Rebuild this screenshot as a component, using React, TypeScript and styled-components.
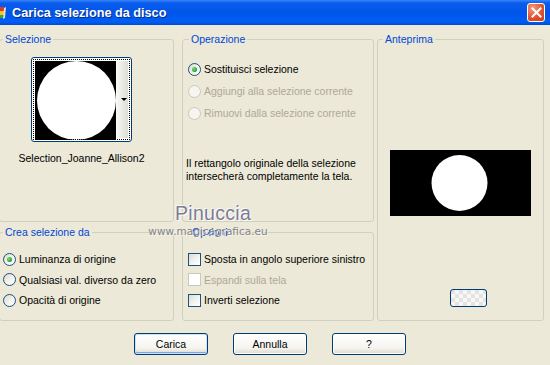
import React from 'react'
import styled, { createGlobalStyle } from 'styled-components'

const GlobalStyle = createGlobalStyle`
  html, body {
    margin: 0;
    padding: 0;
    background: #ece9d8;
  }
  body {
    font-family: "Liberation Sans", Arial, sans-serif;
    font-size: 10.5px;
    color: #000;
    overflow: hidden;
  }
`

const Window = styled.div`
  position: relative;
  width: 550px;
  height: 365px;
  overflow: hidden;
  background: #ece9d8;
`

const TitleBar = styled.div`
  height: 25px;
  display: flex;
  align-items: center;
  padding-right: 5px;
  background: linear-gradient(#3a84f7 0%, #0a5cee 12%, #0055e8 50%, #005ef4 86%, #004bd8 100%);
  color: #fff;
  font: bold 12.7px "Liberation Sans", Arial, sans-serif;
`

const TitleIcon = styled.svg`
  flex: none;
  margin-left: -1px;
`

const TitleText = styled.span`
  flex: 1;
  margin-left: 5px;
  text-shadow: 1px 1px 0 #0a2d8a;
`

const CloseButton = styled.div`
  width: 18px;
  height: 19px;
  box-sizing: border-box;
  border: 1px solid #fff;
  border-radius: 3px;
  background: radial-gradient(circle at 30% 25%, #f49b7e 0%, #e2522f 55%, #c63f1c 100%);
  display: flex;
  align-items: center;
  justify-content: center;
`

const Body = styled.div`
  display: grid;
  grid-template-columns: 175px 8px 192px 3px 167px;
  grid-template-rows: 189px 95px;
  row-gap: 4px;
  grid-template-areas:
    "sel . op . prev"
    "crea . opt . prev";
  margin-left: -1px;
  padding-top: 8px;
`

const Frame = styled.fieldset<{ $area: string }>`
  grid-area: ${p => p.$area};
  margin: 0;
  padding: 0;
  min-width: 0;
  border: 1px solid #d0d0bf;
  border-radius: 3px;
`

const Legend = styled.legend<{ $inset: number }>`
  color: #0046d5;
  padding: 0 2px;
  margin-left: ${p => p.$inset}px;
  line-height: 13px;
`

const SelectionPane = styled.div`
  display: flex;
  flex-direction: column;
  align-items: center;
  padding: 11px 10px 0 0;
`

const Thumb = styled.div`
  position: relative;
  width: 101px;
  height: 85px;
  box-sizing: border-box;
  border: 1px solid #003c74;
  border-radius: 3px;
  padding: 2px;
  background: #fff;
  display: flex;
  &::after {
    content: '';
    position: absolute;
    inset: 1px;
    border: 1px dotted #000;
  }
`

const ThumbImage = styled.svg`
  display: block;
  margin-top: 1px;
  margin-left: 1px;
`

const ThumbStrip = styled.div`
  flex: 1;
  margin: 1px 1px 1px 0;
  background: linear-gradient(to right, #fafaf8, #dcdcd4);
  display: flex;
  align-items: center;
  justify-content: flex-end;
  padding-right: 1px;
`

const Arrow = styled.div`
  width: 0;
  height: 0;
  border-left: 3px solid transparent;
  border-right: 3px solid transparent;
  border-top: 3px solid #000;
`

const ThumbLabel = styled.div`
  margin-top: 10px;
  line-height: 13px;
`

const Pane = styled.div<{ $top: number; $left: number }>`
  padding: ${p => p.$top}px 0 0 ${p => p.$left}px;
`

const OptionList = styled.div<{ $row: number; $indent?: number }>`
  display: flex;
  flex-direction: column;
  padding-left: ${p => p.$indent ?? 0}px;
  & > * {
    height: ${p => p.$row}px;
  }
`

const Option = styled.label<{ $disabled?: boolean }>`
  display: flex;
  align-items: center;
  gap: 3px;
  color: ${p => (p.$disabled ? '#aca899' : '#000')};
  white-space: nowrap;
`

const Radio = styled.span<{ $checked?: boolean; $disabled?: boolean }>`
  flex: none;
  width: 13px;
  height: 13px;
  box-sizing: border-box;
  border-radius: 50%;
  border: 1px solid ${p => (p.$disabled ? '#cac8bb' : '#1c5180')};
  background: ${p =>
    p.$disabled ? '#f6f5ef' : 'linear-gradient(135deg, #dcd9cc 0%, #f4f3ee 55%, #fff 100%)'};
  display: flex;
  align-items: center;
  justify-content: center;
  &::after {
    content: '';
    display: ${p => (p.$checked ? 'block' : 'none')};
    width: 5px;
    height: 5px;
    border-radius: 50%;
    background: radial-gradient(circle at 35% 35%, #7be07b, #21a121 70%);
  }
`

const Check = styled.span<{ $disabled?: boolean }>`
  flex: none;
  width: 13px;
  height: 13px;
  box-sizing: border-box;
  border: 1px solid ${p => (p.$disabled ? '#cac8bb' : '#1c5180')};
  background: ${p =>
    p.$disabled ? '#fff' : 'linear-gradient(135deg, #dcdcd5 0%, #f5f5f1 60%, #fff 100%)'};
`

const Description = styled.p`
  margin: 33px 0 0;
  line-height: 12.5px;
`

const PreviewPane = styled.div`
  display: flex;
  flex-direction: column;
  align-items: center;
  padding-top: 104px;
`

const PreviewButton = styled.div`
  width: 37px;
  height: 18px;
  box-sizing: border-box;
  margin: 73px 0 0 16px;
  border: 1px solid #003c74;
  border-radius: 3px;
  background:
    repeating-conic-gradient(#f7f7f5 0% 25%, #e4e4e0 0% 50%) 0 0 / 8px 8px;
`

const ButtonRow = styled.div`
  display: flex;
  gap: 25px;
  padding: 12px 0 0 134px;
`

const Button = styled.div<{ $default?: boolean }>`
  width: 74px;
  height: 22px;
  box-sizing: border-box;
  border: 1px solid #003c74;
  border-radius: 3px;
  background: linear-gradient(#ffffff 0%, #f5f4ef 70%, #e3e0d4 92%, #d6d0c5 100%);
  box-shadow: ${p =>
    p.$default ? 'inset 0 0 0 1px #cde0fb, inset 0 -1px 0 1px #7ca4e8' : 'inset 0 0 0 1px #fff'};
  display: flex;
  align-items: center;
  justify-content: center;
`

const Watermark = styled.div`
  position: absolute;
  left: 143px;
  top: 202px;
  display: flex;
  flex-direction: column;
  align-items: center;
  width: 130px;
  pointer-events: none;
`

const WatermarkName = styled.span`
  margin-left: 10px;
  font: 19.5px "Liberation Sans", Arial, sans-serif;
  letter-spacing: 0.3px;
  color: #7c7c94;
  text-shadow: 1px 1px 0 #fff, -1px -1px 0 #f8f8f8;
  line-height: 22px;
`

const WatermarkUrl = styled.span`
  font: 10.5px "DejaVu Sans", sans-serif;
  color: #858585;
  text-shadow: 1px 1px 0 #f4f4f4;
  line-height: 13px;
  margin-top: 1px;
`

export default function App() {
  return (
    <Window>
      <GlobalStyle />
      <TitleBar>
        <TitleIcon width="8" height="14" viewBox="0 0 8 14">
          <rect x="0" y="1" width="5" height="4" fill="#d83a2a" />
          <rect x="0" y="5" width="6" height="4" fill="#f4c430" />
          <rect x="0" y="9" width="4" height="3" fill="#3aa63a" />
          <path d="M5 2 L7 1 L6 12 L4 13 Z" fill="#e8e0c8" />
        </TitleIcon>
        <TitleText>Carica selezione da disco</TitleText>
        <CloseButton>
          <svg width="11" height="11" viewBox="0 0 11 11">
            <path d="M1.5 1.5 L9.5 9.5 M9.5 1.5 L1.5 9.5" stroke="#fff" strokeWidth="2" strokeLinecap="square" />
          </svg>
        </CloseButton>
      </TitleBar>

      <Body>
        <Frame $area="sel">
          <Legend $inset={3}>Selezione</Legend>
          <SelectionPane>
            <Thumb>
              <ThumbImage width="81" height="79" viewBox="0 0 81 79">
                <rect width="81" height="79" fill="#000" />
                <circle cx="41.5" cy="39.5" r="39.5" fill="#fff" />
              </ThumbImage>
              <ThumbStrip>
                <Arrow />
              </ThumbStrip>
            </Thumb>
            <ThumbLabel>Selection_Joanne_Allison2</ThumbLabel>
          </SelectionPane>
        </Frame>

        <Frame $area="op">
          <Legend $inset={6}>Operazione</Legend>
          <Pane $top={12} $left={3}>
            <OptionList $row={22} $indent={2}>
              <Option>
                <Radio $checked />
                Sostituisci selezione
              </Option>
              <Option $disabled>
                <Radio $disabled />
                Aggiungi alla selezione corrente
              </Option>
              <Option $disabled>
                <Radio $disabled />
                Rimuovi dalla selezione corrente
              </Option>
            </OptionList>
            <Description>
              Il rettangolo originale della selezione
              <br />
              intersecherà completamente la tela.
            </Description>
          </Pane>
        </Frame>

        <Frame $area="prev">
          <Legend $inset={5}>Anteprima</Legend>
          <PreviewPane>
            <svg width="141" height="66" viewBox="0 0 141 66">
              <rect width="141" height="66" fill="#000" />
              <circle cx="69.5" cy="33" r="28" fill="#fff" />
            </svg>
            <PreviewButton />
          </PreviewPane>
        </Frame>

        <Frame $area="crea">
          <Legend $inset={3}>Crea selezione da</Legend>
          <Pane $top={10} $left={3}>
            <OptionList $row={20.5}>
              <Option>
                <Radio $checked />
                Luminanza di origine
              </Option>
              <Option>
                <Radio />
                Qualsiasi val. diverso da zero
              </Option>
              <Option>
                <Radio />
                Opacità di origine
              </Option>
            </OptionList>
          </Pane>
        </Frame>

        <Frame $area="opt">
          <Legend $inset={7}>Opzioni</Legend>
          <Pane $top={10} $left={5}>
            <OptionList $row={20.5}>
              <Option>
                <Check />
                Sposta in angolo superiore sinistro
              </Option>
              <Option $disabled>
                <Check $disabled />
                Espandi sulla tela
              </Option>
              <Option>
                <Check />
                Inverti selezione
              </Option>
            </OptionList>
          </Pane>
        </Frame>
      </Body>

      <ButtonRow>
        <Button $default>Carica</Button>
        <Button>Annulla</Button>
        <Button>?</Button>
      </ButtonRow>

      <Watermark>
        <WatermarkName>Pinuccia</WatermarkName>
        <WatermarkUrl>www.magicagrafica.eu</WatermarkUrl>
      </Watermark>
    </Window>
  )
}
